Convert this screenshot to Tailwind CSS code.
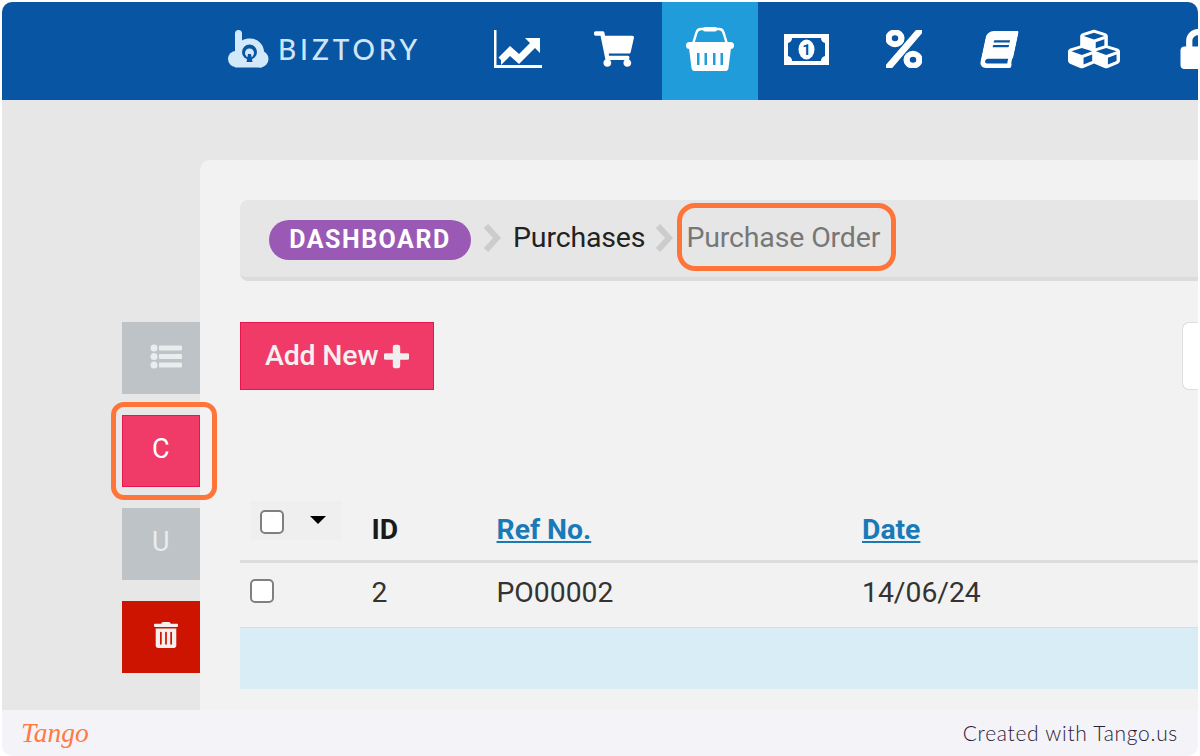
<!DOCTYPE html>
<html lang="en">
<head>
    <meta charset="UTF-8">
    <title>Purchase Order</title>
    <script src="https://cdn.jsdelivr.net/npm/@tailwindcss/browser@4"></script>
</head>
<body class="bg-white">
<div class="relative w-[1200px] h-[756px] overflow-hidden font-['Roboto',sans-serif]">
    <div class="mx-[2px] mt-[2px] h-[754px] flex flex-col rounded-[10px] overflow-hidden">

        <!-- Top bar -->
        <header class="h-[98px] shrink-0 flex bg-[#0855a3] text-white">
            <div class="w-[468px] shrink-0 flex items-center pl-[226px] pb-[5px]">
                <svg class="w-[41px] h-[38px] mr-[9px]" viewBox="0 0 41 38" fill="#d3e9f9">
                    <circle cx="8" cy="29" r="8"/>
                    <circle cx="32" cy="29" r="8.500"/>
                    <rect x="7" y="29" width="27" height="8.500"/>
                    <path d="M7 3.500a3.500 3.500 0 0 1 7 0v7c2.500-1.500 5-2 8-2a14 14 0 0 1 0 28c-8 0-15-6-15-14z"/>
                    <circle cx="21.500" cy="22" r="7.500" fill="#0855a3"/>
                    <circle cx="21.500" cy="23" r="4.500" fill="#d3e9f9"/>
                    <path d="M20 24h3l1.500 8h-6z" fill="#0855a3"/>
                </svg>
                <span class="font-['Lato',sans-serif] font-medium text-[28px] leading-none tracking-[3.900px] text-[#cfe5f6]">BIZTORY</span>
            </div>
            <a class="w-[96px] shrink-0 flex items-center justify-center pb-[4px]">
                <svg class="w-[48px] h-[38px]" viewBox="0 0 48 38" fill="white">
                    <path d="M0 0h2.500v35H48v3H0z"/>
                    <path d="M7 30l-2.500-2.500L16 16l9 8 11-11-5-5h15v15l-5-5-16 16-9-8-9 9z"/>
                </svg>
            </a>
            <a class="w-[96px] shrink-0 flex items-center justify-center pb-[4px]">
                <svg class="w-[40px] h-[36px]" viewBox="0 0 576 512" fill="white"><path d="M528.120 301.319l47.273-208C578.806 78.301 567.391 64 551.990 64H159.208l-9.166-44.810C147.758 8.021 137.930 0 126.529 0H24C10.745 0 0 10.745 0 24v16c0 13.255 10.745 24 24 24h69.883l70.248 343.435C147.325 417.100 136 435.222 136 456c0 30.928 25.072 56 56 56s56-25.072 56-56c0-15.674-6.447-29.835-16.824-40h209.647C430.447 426.165 424 440.326 424 456c0 30.928 25.072 56 56 56s56-25.072 56-56c0-22.172-12.888-41.332-31.579-50.405l5.517-24.276c3.413-15.018-8.002-29.319-23.403-29.319H218.117l-6.545-32h293.145c11.206 0 20.920-7.754 23.403-18.681z"/></svg>
            </a>
            <a class="w-[96px] shrink-0 flex items-center justify-center pb-[4px] bg-[#1f9cd9]">
                <svg class="w-[48px] h-[44px]" viewBox="0 0 48 44" fill="white">
                    <path d="M7 17l3.500-11.500Q11.500 2 15 2h18q3.500 0 4.500 3.500L41 17" fill="none" stroke="white" stroke-width="2.500"/>
                    <rect x="17" y="0" width="14" height="4.500" rx="2"/>
                    <rect x="0" y="15" width="48" height="7" rx="3.500"/>
                    <path d="M3 21h42l-2.500 20q-.4 3-3 3H8.500q-2.600 0-3-3z"/>
                    <path d="M11 26h2.500v12H11zM18.500 26H21v12h-2.500zM27 26h2.500v12H27zM34.500 26H37v12h-2.500z" fill="#1f9cd9"/>
                </svg>
            </a>
            <a class="w-[96px] shrink-0 flex items-center justify-center pb-[4px]">
                <svg class="w-[45px] h-[31px]" viewBox="0 0 45 31" fill="white">
                    <rect width="45" height="31"/>
                    <path d="M8 4h29q0 4 4 5v13q-4 1-4 5H8q0-4-4-5V9q4-1 4-5z" fill="#0855a3"/>
                    <ellipse cx="22.500" cy="15.500" rx="8" ry="10"/>
                    <text x="22.500" y="21" text-anchor="middle" font-size="15" font-weight="700" fill="#0855a3">1</text>
                </svg>
            </a>
            <a class="w-[96px] shrink-0 flex items-center justify-center pb-[4px] pl-[3px]">
                <svg class="w-[36px] h-[38px]" viewBox="0 0 448 512" preserveAspectRatio="none" fill="white" stroke="white" stroke-width="14"><path d="M112 224c61.900 0 112-50.100 112-112S173.900 0 112 0 0 50.100 0 112s50.100 112 112 112zm0-160c26.500 0 48 21.500 48 48s-21.500 48-48 48-48-21.500-48-48 21.500-48 48-48zm224 224c-61.900 0-112 50.100-112 112s50.100 112 112 112 112-50.100 112-112-50.100-112-112-112zm0 160c-26.500 0-48-21.500-48-48s21.500-48 48-48 48 21.500 48 48-21.500 48-48 48zM392.300.2l31.600-.1c19.400-.1 30.900 21.800 19.700 37.800L77.400 501.600a23.950 23.950 0 0 1-19.600 10.200l-33.400.1c-19.500 0-30.900-21.900-19.700-37.800l368-463.700C377.200 4 384.500.2 392.300.2z"/></svg>
            </a>
            <a class="w-[96px] shrink-0 flex items-center justify-center pb-[4px] pl-[2px]">
                <svg class="w-[32px] h-[37px] -skew-x-12" viewBox="0 0 448 512" preserveAspectRatio="none" fill="white"><path d="M448 360V24c0-13.300-10.700-24-24-24H96C43 0 0 43 0 96v320c0 53 43 96 96 96h328c13.300 0 24-10.700 24-24v-16c0-7.500-3.500-14.300-8.900-18.700-4.200-15.400-4.200-59.300 0-74.700 5.400-4.300 8.900-11.100 8.900-18.600zM128 134c0-3.300 2.700-6 6-6h212c3.300 0 6 2.700 6 6v20c0 3.300-2.700 6-6 6H134c-3.300 0-6-2.700-6-6v-20zm0 64c0-3.300 2.700-6 6-6h212c3.300 0 6 2.700 6 6v20c0 3.300-2.700 6-6 6H134c-3.300 0-6-2.700-6-6v-20zm253.400 250H96c-17.700 0-32-14.300-32-32 0-17.600 14.400-32 32-32h285.400c-1.900 17.100-1.900 46.900 0 64z"/></svg>
            </a>
            <a class="w-[96px] shrink-0 flex items-center justify-center pb-[4px]">
                <svg class="w-[52px] h-[44px]" viewBox="0 0 512 512" preserveAspectRatio="none" fill="white"><path d="M488.600 250.200L392 214V105.500c0-15-9.300-28.400-23.400-33.700l-100-37.500c-8.100-3.100-17.100-3.100-25.300 0l-100 37.500c-14.100 5.300-23.400 18.700-23.400 33.700V214l-96.600 36.200C9.300 255.500 0 268.900 0 283.900V394c0 13.600 7.700 26.100 19.900 32.200l100 50c10.100 5.100 22.100 5.100 32.200 0l103.900-52 103.900 52c10.100 5.100 22.100 5.100 32.200 0l100-50c12.200-6.100 19.900-18.600 19.900-32.200V283.900c0-15-9.300-28.400-23.400-33.700zM358 214.800l-85 31.900v-68.200l85-37v73.300zM154 104.100l102-38.200 102 38.200v.6l-102 41.400-102-41.400v-.6zm84 291.100l-85 42.500v-79.100l85-38.800v75.400zm0-112l-102 41.400-102-41.400v-.6l102-38.200 102 38.200v.6zm240 112l-85 42.500v-79.100l85-38.800v75.400zm0-112l-102 41.400-102-41.400v-.6l102-38.200 102 38.200v.6z"/></svg>
            </a>
            <a class="w-[96px] shrink-0 flex items-center justify-center pb-[4px] pl-[16px]">
                <svg class="w-[38px] h-[40px] shrink-0" viewBox="0 0 448 512" fill="white"><path d="M400 224h-24v-72C376 68.200 307.800 0 224 0S72 68.200 72 152v72H48c-26.500 0-48 21.500-48 48v192c0 26.500 21.500 48 48 48h352c26.500 0 48-21.500 48-48V272c0-26.500-21.500-48-48-48zm-104 0H152v-72c0-39.700 32.300-72 72-72s72 32.300 72 72v72z"/></svg>
            </a>
        </header>

        <!-- Body -->
        <div class="h-[610px] shrink-0 flex bg-[#e7e7e7] pt-[60px] overflow-hidden">
            <!-- CRUD tabs -->
            <aside class="w-[197.500px] shrink-0 pl-[120px] pt-[162px] flex flex-col gap-[21px]">
                <button class="w-[77.500px] h-[72px] flex items-center justify-center pl-[10px] pb-[4px] bg-[#bdc3c7]">
                    <svg class="w-[32px] h-[25px]" viewBox="0 0 32 25" fill="#e8eeee">
                        <circle cx="4" cy="4" r="3.500"/><circle cx="4" cy="12.500" r="3.500"/><circle cx="4" cy="21" r="3.500"/>
                        <rect x="9" y="1.500" width="23" height="5" rx="1"/><rect x="9" y="10" width="23" height="5" rx="1"/><rect x="9" y="18.500" width="23" height="5" rx="1"/>
                    </svg>
                </button>
                <button class="w-[77.500px] h-[72px] flex items-center justify-center pb-[3px] bg-[#f03a68] border border-[#e6164f] text-white text-[27px]">C</button>
                <button class="w-[77.500px] h-[72px] flex items-center justify-center pb-[3px] bg-[#bdc3c7] text-[#e8eeee] text-[27px]">U</button>
                <button class="w-[77.500px] h-[72px] flex items-center justify-center pl-[11px] pb-[4px] bg-[#cc1400]">
                    <svg class="w-[24px] h-[26px]" viewBox="0 0 448 512" preserveAspectRatio="none" fill="#f7eeee"><path d="M32 464a48 48 0 0 0 48 48h288a48 48 0 0 0 48-48V128H32zm272-256a16 16 0 0 1 32 0v224a16 16 0 0 1-32 0zm-96 0a16 16 0 0 1 32 0v224a16 16 0 0 1-32 0zm-96 0a16 16 0 0 1 32 0v224a16 16 0 0 1-32 0zM432 32H312l-9.400-18.700A24 24 0 0 0 281.100 0H166.800a23.720 23.720 0 0 0-21.400 13.300L136 32H16A16 16 0 0 0 0 48v32a16 16 0 0 0 16 16h416a16 16 0 0 0 16-16V48a16 16 0 0 0-16-16z"/></svg>
                </button>
            </aside>

            <!-- Card -->
            <main class="flex-1 bg-[#f2f2f2] rounded-tl-[10px] pl-[40.500px] pt-[40px]">
                <nav class="h-[81px] flex items-center pl-[29px] bg-[#e6e6e6] border-b-4 border-[#dcdcdc] rounded-l-[8px] text-[28.500px] tracking-[-0.150px]">
                    <span class="h-[40px] w-[202px] mt-[3px] flex items-center justify-center rounded-full bg-[#9b59b6] text-white font-bold text-[25px] tracking-[1.500px]">DASHBOARD</span>
                    <svg class="w-[18px] h-[30px] ml-[12px] mb-[2px]" viewBox="0 0 18 30" fill="none" stroke="#cccccc" stroke-width="6"><path d="M3 3l11 12-11 12"/></svg>
                    <span class="ml-[12px] text-[#222222]">Purchases</span>
                    <svg class="w-[18px] h-[30px] ml-[10px] mb-[2px]" viewBox="0 0 18 30" fill="none" stroke="#cccccc" stroke-width="6"><path d="M3 3l11 12-11 12"/></svg>
                    <span class="ml-[13px] text-[#777777]">Purchase Order</span>
                </nav>

                <div class="mt-[41px] flex justify-between">
                    <button class="w-[194px] h-[68px] flex items-center gap-[6px] pl-[24px] bg-[#f03a68] border border-[#e6164f] text-[#f5f0f0] text-[28.500px] font-medium tracking-[-0.200px]">
                        Add New
                        <svg class="w-[25px] h-[25px]" viewBox="0 0 448 512" preserveAspectRatio="none" fill="#f0eeee" stroke="#f0eeee" stroke-width="36"><path d="M416 208H272V64c0-17.670-14.330-32-32-32h-32c-17.670 0-32 14.330-32 32v144H32c-17.670 0-32 14.330-32 32v32c0 17.670 14.330 32 32 32h144v144c0 17.670 14.330 32 32 32h32c17.670 0 32-14.330 32-32V304h144c17.670 0 32-14.330 32-32v-32c0-17.670-14.330-32-32-32z"/></svg>
                    </button>
                    <input class="w-[16px] h-[68px] bg-white border border-r-0 border-[#dddddd] rounded-l-[7px]">
                </div>

                <table class="mt-[111px] w-[958px] table-fixed border-collapse text-[28.300px] text-[#333333]">
                    <colgroup>
                        <col class="w-[131.500px]"><col class="w-[125px]"><col class="w-[365.500px]"><col>
                    </colgroup>
                    <thead>
                        <tr class="h-[60px] border-b-[3px] border-[#dddddd]">
                            <th class="p-0 pl-[9.500px] align-top">
                                <div class="w-[92px] h-[39px] flex items-start pl-[10px] pt-[9px] bg-[#efefef]">
                                    <input type="checkbox" class="appearance-none w-[24px] h-[24px] bg-white border-2 border-[#808080] rounded-[5px]">
                                    <span class="ml-[26px] mt-[6px] border-x-[8px] border-x-transparent border-t-[8px] border-t-black"></span>
                                </div>
                            </th>
                            <th class="p-0 text-left font-bold text-[#1a1a1a]">ID</th>
                            <th class="p-0 text-left font-bold"><a class="text-[#1a7ab8] underline">Ref No.</a></th>
                            <th class="p-0 text-left font-bold"><a class="text-[#1a7ab8] underline">Date</a></th>
                        </tr>
                    </thead>
                    <tbody>
                        <tr class="h-[66px] border-b border-[#dddddd]">
                            <td class="p-0 pl-[9.500px] pb-[7px]"><input type="checkbox" class="block appearance-none w-[24px] h-[24px] bg-white border-2 border-[#808080] rounded-[5px]"></td>
                            <td class="p-0 pb-[2px]">2</td>
                            <td class="p-0 pb-[2px]">PO00002</td>
                            <td class="p-0 pb-[2px]">14/06/24</td>
                        </tr>
                        <tr class="h-[62px] bg-[#d9edf7]"><td colspan="4"></td></tr>
                    </tbody>
                </table>
            </main>
        </div>

        <!-- Tango footer -->
        <footer class="flex-1 flex items-center justify-between bg-[#f4f3f8] pl-[19px] pr-[20px]">
            <span class="font-['Liberation_Serif',serif] italic text-[27.500px] leading-none text-[#ff7a45]">Tango</span>
            <span class="font-['Lato',sans-serif] font-light text-[21px] tracking-[0.700px] text-[#2a2036]">Created with Tango.us</span>
        </footer>
    </div>

    <!-- Highlight outlines -->
    <div class="absolute left-[677px] top-[203px] w-[219px] h-[68px] border-[5px] border-[#ff7539] rounded-[18px]"></div>
    <div class="absolute left-[111px] top-[402px] w-[106px] h-[98px] border-[5px] border-[#ff7539] rounded-[13px]"></div>
</div>
</body>
</html>
